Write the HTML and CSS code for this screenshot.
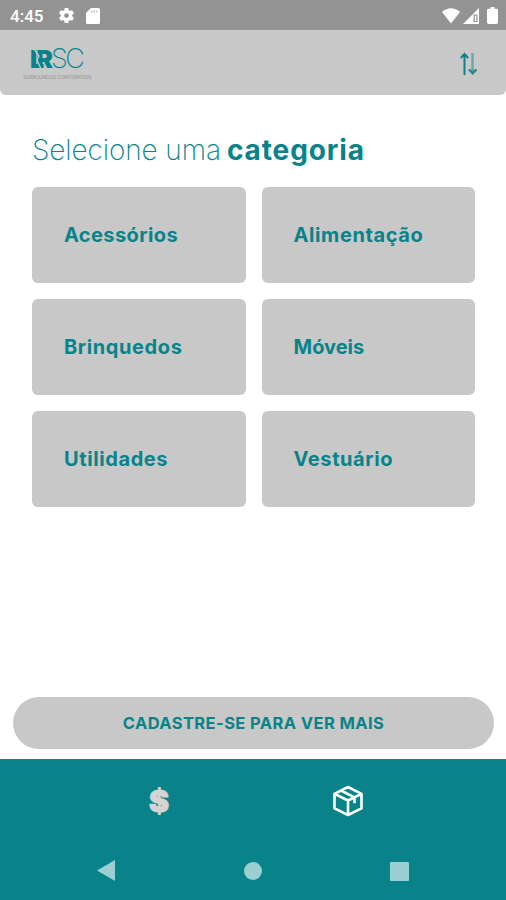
FILE: index.html
```html
<!DOCTYPE html>
<html lang="pt-BR">
<head>
    <meta charset="UTF-8">
    <meta name="viewport" content="width=device-width, initial-scale=1.0">
    <title>LRSC - Categorias</title>
    <link rel="stylesheet" href="styles.css">
</head>
<body>

<div class="status-bar">
    <span class="hora">4:45</span>
    <svg class="icone-config" width="19" height="19" viewBox="0 0 24 24" fill="#fff"><path d="M19.14 12.94a7 7 0 0 0 0-1.88l2.03-1.58a.5.5 0 0 0 .12-.61l-1.92-3.32a.5.5 0 0 0-.59-.22l-2.39.96a7 7 0 0 0-1.62-.94l-.36-2.54a.5.5 0 0 0-.48-.41h-3.84a.5.5 0 0 0-.47.41l-.36 2.54a7 7 0 0 0-1.63.94l-2.39-.96a.5.5 0 0 0-.59.22L2.74 8.87a.5.5 0 0 0 .12.61l2.03 1.58a7 7 0 0 0 0 1.88l-2.03 1.58a.5.5 0 0 0-.12.61l1.92 3.32c.12.22.37.29.59.22l2.39-.96c.5.38 1.03.7 1.62.94l.36 2.54c.05.24.24.41.48.41h3.84c.24 0 .44-.17.47-.41l.36-2.54a7 7 0 0 0 1.62-.94l2.39.96c.22.08.47 0 .59-.22l1.92-3.32a.5.5 0 0 0-.12-.61zM12 15a3 3 0 1 1 0-6 3 3 0 0 1 0 6z"/></svg>
    <svg class="icone-sd" width="14" height="16" viewBox="0 0 14 16"><path fill="#fff" d="M5 0h7.500q1.500 0 1.500 1.500v13q0 1.500-1.500 1.500h-11Q0 16 0 14.500V5z"/><path fill="#c4c4c4" d="M5 2.500h1.400v2H5zM7.600 2.500H9v2H7.600zM10.200 2.500h1.400v2h-1.400z"/></svg>
    <div class="status-direita">
        <svg width="18" height="16" viewBox="0 0 18 16" fill="#fff"><path d="M0 4Q9-3.500 18 4L9 15.500z"/></svg>
        <svg width="16" height="16" viewBox="0 0 16 16"><path fill="#fff" d="M16 0v16H0z"/><path fill="#939393" d="M10.500 6.500h4V14h-4z"/><path fill="#fff" d="M11.800 7.500h1.500v5.500h-1.500z"/></svg>
        <svg width="11" height="17" viewBox="0 0 11 17" fill="#fff"><path d="M3.500 0h4v1.800H9.500q1.500 0 1.500 1.500v12q0 1.700-1.500 1.700h-8Q0 17 0 15.300v-12q0-1.500 1.500-1.500h2z"/></svg>
    </div>
</div>

<header class="topo">
    <div class="logo">
        <div class="logo-nome"><b>LR</b><span>SC</span></div>
        <svg class="logo-corte" width="20" height="20" viewBox="0 0 20 20"><path d="M4 0l5 7-2 4 4 9" fill="none" stroke="#c8c8c8" stroke-width="1.300"/></svg>
        <div class="logo-texto">SURROUNDOS CORPORATION</div>
    </div>
    <svg class="setas" width="18" height="24" viewBox="0 0 18 24" fill="none" stroke-width="2"><path stroke="#08838a" d="M4.500 23V2M.8 6l3.700-4 3.700 4"/><path stroke="#6aa9ac" stroke-width="2.500" d="M12.500 1v19"/><path fill="#4d9ea2" d="M9 17.500h7.500L12.800 22z"/><path stroke="#26898e" d="M8.800 17.500l3.900 4 3.900-4"/></svg>
</header>

<main class="conteudo">
    <h1><span>Selecione uma</span> <b>categoria</b></h1>
    <div class="categorias">
        <div class="categoria"><span class="acessorios">Acessórios</span></div>
        <div class="categoria">Alimentação</div>
        <div class="categoria">Brinquedos</div>
        <div class="categoria"><span class="moveis">Móveis</span></div>
        <div class="categoria">Utilidades</div>
        <div class="categoria">Vestuário</div>
    </div>
</main>

<button class="cadastro">CADASTRE-SE PARA VER MAIS</button>

<footer class="rodape">
    <nav class="menu">
        <span class="cifrao">$</span>
        <svg class="caixa" width="32" height="32" viewBox="0 0 32 32" fill="none" stroke="#fff" stroke-width="2.600" stroke-linejoin="round"><path d="M16 2l13.500 6.800v14.500L16 30 2.500 23.300V8.800zM2.500 8.800L16 15.500l13.500-6.700M16 15.500V30M9 5.500l13.500 6.800v6"/></svg>
    </nav>
    <div class="sistema">
        <svg width="18" height="21" viewBox="0 0 18 21" fill="#9ccfd2"><path d="M0 10.500L18 0v21z"/></svg>
        <div class="inicio"></div>
        <div class="recentes"></div>
    </div>
</footer>

</body>
</html>
```
FILE: styles.css
```css
* {
    box-sizing: border-box;
}
body {
    font-family: 'Inter', 'Roboto', sans-serif;
    display: flex;
    flex-direction: column;
    height: 900px;
    margin: 0;
    background-color: #fff;
    color: #08838a;
    overflow: hidden;
}
svg {
    display: block;
    flex-shrink: 0;
}
.status-bar {
    display: flex;
    align-items: center;
    height: 30px;
    padding: 1px 8px 0 10px;
    background-color: #939393;
    color: white;
}
.hora {
    width: 47px;
    font-family: 'Roboto', sans-serif;
    font-size: 17px;
    font-weight: 500;
}
.icone-sd {
    margin-left: 10px;
}
.status-direita {
    display: flex;
    align-items: center;
    gap: 3px;
    margin-left: auto;
}
.status-direita svg:last-child {
    margin-left: 5px;
}
.topo {
    display: flex;
    justify-content: space-between;
    height: 65px;
    padding: 16px 28px 0 23px;
    background-color: #c8c8c8;
    border-radius: 0 0 6px 6px;
}
.logo {
    position: relative;
    width: 70px;
}
.logo-nome {
    display: flex;
    height: 26px;
    padding-left: 7px;
    line-height: 26px;
}
.logo-nome b {
    width: 21px;
    font-size: 25px;
    font-weight: 900;
    letter-spacing: -8px;
}
.logo-nome span {
    font-size: 27px;
    font-weight: 200;
    letter-spacing: -2.5px;
}
.logo-corte {
    position: absolute;
    top: 3px;
    left: 7px;
}
.logo-texto {
    margin-top: 2px;
    font-size: 5px;
    font-weight: 300;
    line-height: 6px;
    letter-spacing: -0.2px;
    white-space: nowrap;
    color: #858585;
}
.setas {
    margin-top: 6px;
}
.conteudo {
    flex: 1;
    padding: 36px 31px 0 32px;
}
h1 {
    display: flex;
    gap: 6px;
    height: 56px;
    margin: 0;
    font-size: 28px;
    font-weight: 200;
    line-height: 38px;
    letter-spacing: -0.1px;
    white-space: nowrap;
}
h1 b {
    font-weight: 700;
    letter-spacing: 0.9px;
}
.categorias {
    display: grid;
    grid-template-columns: 1fr 1fr;
    gap: 16px;
}
.categoria {
    display: flex;
    align-items: center;
    height: 96px;
    padding-left: 32px;
    border-radius: 6px;
    background-color: #c8c8c8;
    font-size: 20px;
    font-weight: 700;
    letter-spacing: 0.6px;
}
.acessorios {
    letter-spacing: 0.4px;
}
.moveis {
    letter-spacing: 0;
}
.cadastro {
    height: 52px;
    margin: 0 12px 10px 13px;
    padding: 0;
    border: none;
    border-radius: 26px;
    background-color: #c8c8c8;
    color: #08838a;
    font-family: inherit;
    font-size: 16.5px;
    font-weight: 700;
    letter-spacing: 0.4px;
}
.rodape {
    height: 141px;
    background-color: #08838a;
}
.menu {
    display: flex;
    align-items: center;
    height: 83px;
    padding-left: 149px;
}
.cifrao {
    width: 183px;
    color: #d4d4d4;
    font-size: 30px;
    font-weight: 900;
    -webkit-text-stroke: 1px #d4d4d4;
}
.sistema {
    display: flex;
    justify-content: space-between;
    align-items: center;
    height: 58px;
    padding: 0 97px 0 97px;
}
.sistema svg {
    margin-top: -1px;
}
.inicio {
    width: 18px;
    height: 18px;
    border-radius: 50%;
    background-color: #9ccfd2;
}
.recentes {
    width: 19px;
    height: 19px;
    border-radius: 1px;
    background-color: #9ccfd2;
}
```
